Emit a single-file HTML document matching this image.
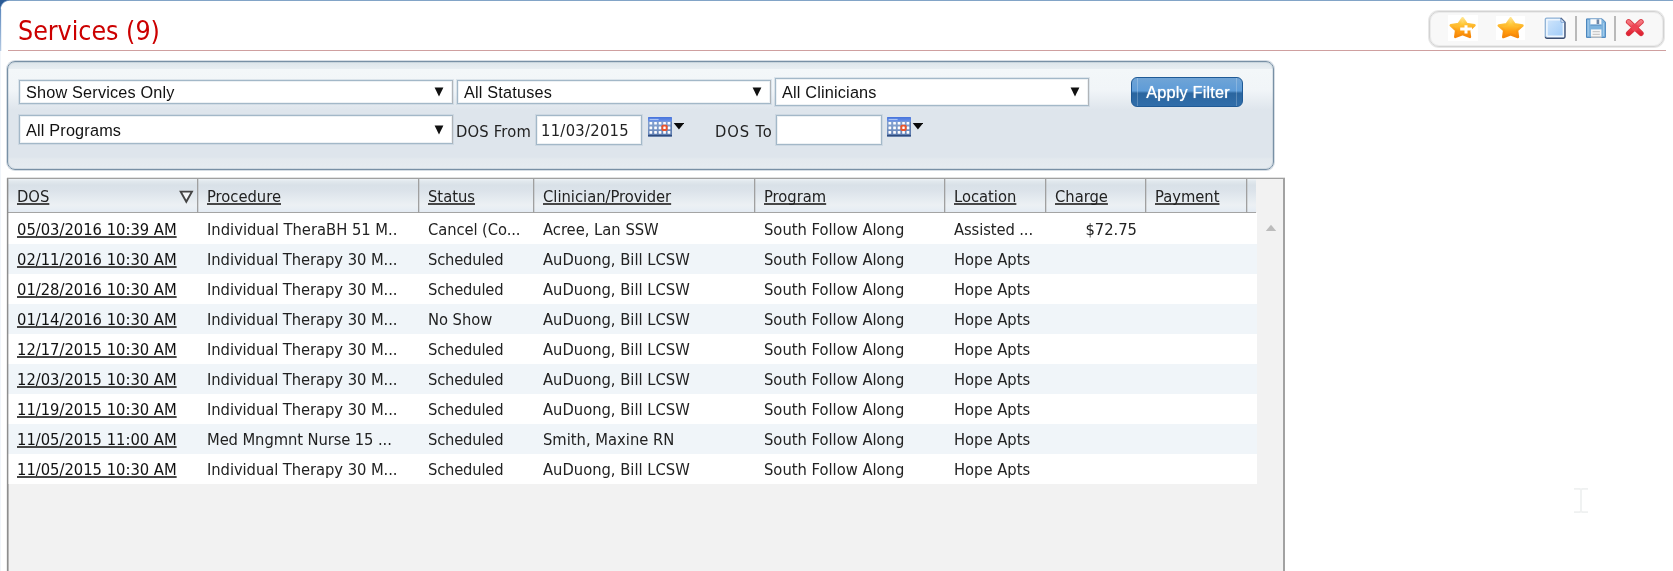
<!DOCTYPE html>
<html>
<head>
<meta charset="utf-8">
<title>Services (9)</title>
<style>
html,body{margin:0;padding:0;}
body{width:1673px;height:571px;overflow:hidden;background:#fff;position:relative;
  font-family:"DejaVu Sans Condensed","DejaVu Sans","Liberation Sans",sans-serif;color:#222;}
.abs{position:absolute;}
#topline{left:0;top:0;width:1673px;height:1px;background:#82a4c7;}
#title{left:18px;top:12px;font-size:26.5px;line-height:38px;color:#cc0000;white-space:nowrap;}
#redline{left:8px;top:50px;width:1658px;height:1px;background:#cfa0a0;}
#toolbar{left:1429px;top:11px;width:233px;height:34px;border:1px solid #d3d3d3;border-radius:10px;background:#f8f8f8;box-shadow:0 0 0 1px rgba(205,205,205,.45), inset 0 0 0 1px rgba(205,205,205,.3);}
.sep{width:2px;height:25px;top:16px;background:#b9b9b9;}
#filter{left:7px;top:61px;width:1265px;height:107px;border:1px solid #7890a5;border-radius:8px;
  box-shadow:0 0 0 1px rgba(120,144,165,.3), inset 0 0 0 1px rgba(120,144,165,.2);
  background:linear-gradient(#dde5ea 0px,#e8eef2 7px,#f3f7f9 7.5px,#f1f5f8 28px,#dee5ec 48px,#dee5ec 95px,#e3e9ee 97px,#e5ebf0 107px);}
.sel{background:#fff;border:1px solid #a3b8c8;border-right-color:#b0b4b8;box-shadow:0 0 0 1px rgba(163,184,200,.28), inset 0 0 0 1px rgba(163,184,200,.2);box-sizing:border-box;font-family:"Liberation Sans",sans-serif;font-size:16.25px;letter-spacing:.18px;color:#111;white-space:nowrap;}
.sel span{position:absolute;left:6px;line-height:20px;}
.sel svg{position:absolute;}
.lbl{font-size:16.4px;letter-spacing:.2px;line-height:20px;white-space:nowrap;color:#222;}
.inp{background:#fff;border:1px solid #a3b8c8;box-shadow:0 0 0 1px rgba(163,184,200,.28), inset 0 0 0 1px rgba(163,184,200,.2);box-sizing:border-box;font-size:16.4px;white-space:nowrap;}
.inp span{position:absolute;left:5px;top:5px;line-height:20px;}
#btn{left:1131px;top:77px;width:112px;height:30px;box-sizing:border-box;border:1px solid #1f5a96;border-radius:6px;padding-left:2px;
  background:linear-gradient(#70a4d6 0,#5e9cd8 46%,#2b669f 54%,#306daa 100%);color:#fff;font-family:"Liberation Sans",sans-serif;font-size:16.25px;text-align:center;line-height:28px;letter-spacing:.2px;text-shadow:0 0 1px #fff;white-space:nowrap;}
#btn:before,#btn:after{content:"";position:absolute;top:0;width:1px;height:28px;background:rgba(255,255,255,.22);}
#btn:before{left:5px;}
#btn:after{right:5px;}
#grid{left:7px;top:178px;width:1275px;height:400px;border:1px solid #a0a0a0;border-left-color:#8e8e8e;border-right:2px solid #a2a2a2;background:#f2f2f2;box-shadow:0 -1px 0 rgba(160,160,160,.3), inset 1px 0 0 rgba(140,140,140,.35), -1px 0 0 rgba(140,140,140,.15);}
#hdr{left:0;top:0;width:1248px;height:33px;background:linear-gradient(#eef3f7 0,#e2e9ee 2px,#d9e1e8 6px,#dce3ea 12px,#e5ebf0 20px,#ecf0f4 26px,#e8eef4 30px,#e3eaf2 33px);border-bottom:1px solid #a4a4a4;}
#hdr u{text-decoration-thickness:2px;text-underline-offset:1px;text-decoration-color:#484848;text-decoration-skip-ink:none;top:8px;font-size:16.4px;line-height:20px;white-space:nowrap;color:#222;}
.hs{top:0;width:1px;height:34px;background:#a0a0a0;box-shadow:1px 0 0 rgba(160,160,160,.3);}
.row{left:0;width:1249px;height:30px;background:#fff;}
.row.alt{background:#f0f5f9;}
.row span{position:absolute;top:5px;font-size:16.4px;line-height:20px;white-space:nowrap;color:#222;}
.row span.d{text-decoration:underline;text-decoration-thickness:2px;text-underline-offset:1px;text-decoration-color:#484848;text-decoration-skip-ink:none;color:#111;}
#sbar{left:1249px;top:0;width:26px;height:400px;background:#f2f2f2;}
#page{position:absolute;left:0;top:0;width:1673px;height:571px;will-change:transform;}
#corner{left:0;top:0;width:9px;height:9px;background:radial-gradient(circle at 9px 9px,rgba(255,255,255,1) 7.6px,#7fa2cc 8.3px,#2b5b95 9.2px);}
#leftline{left:0;top:9px;width:1px;height:42px;background:linear-gradient(#5f8abf,#b4c9e2);box-shadow:1px 0 0 rgba(120,160,205,.15);}
#leftline2{left:0;top:51px;width:1px;height:520px;background:#f1f5fa;}
.row span.c1{letter-spacing:0;}
.row span.c2{letter-spacing:-.04px;}
#lb{left:0;top:0;width:1px;height:400px;background:rgba(140,140,140,.35);}
</style>
</head>
<body>
<div id="page">
<div id="topline" class="abs"></div>
<div id="leftline" class="abs"></div>
<div id="leftline2" class="abs"></div>
<div id="corner" class="abs"></div>
<div id="title" class="abs">Services (9)</div>
<div id="redline" class="abs"></div>
<div id="toolbar" class="abs"></div>
<div class="abs sep" style="left:1575px"></div>
<div class="abs sep" style="left:1614px"></div>
<svg width="0" height="0" style="position:absolute"><defs>
<linearGradient id="gs" x1="0" y1="0" x2="0" y2="1"><stop offset="0" stop-color="#ffee9a"/><stop offset="0.3" stop-color="#ffcb3c"/><stop offset="0.7" stop-color="#ff9d10"/><stop offset="1" stop-color="#ff8a08"/></linearGradient>
<linearGradient id="gp" x1="0" y1="0" x2="1" y2="1"><stop offset="0" stop-color="#d3e7fb"/><stop offset="1" stop-color="#9cc9f8"/></linearGradient>
<linearGradient id="gx" x1="0" y1="0" x2="0" y2="1"><stop offset="0" stop-color="#f47880"/><stop offset="0.5" stop-color="#ee4454"/><stop offset="1" stop-color="#e02434"/></linearGradient>
<linearGradient id="gf" x1="0" y1="0" x2="0" y2="1"><stop offset="0" stop-color="#6aa5dc"/><stop offset="1" stop-color="#3f7fc0"/></linearGradient>
<linearGradient id="gc" x1="0" y1="0" x2="0" y2="1"><stop offset="0" stop-color="#4673dc"/><stop offset="1" stop-color="#6d93e6"/></linearGradient>
<linearGradient id="gs2" x1="0" y1="0" x2="0" y2="1"><stop offset="0" stop-color="#ffe388"/><stop offset="0.3" stop-color="#ffc236"/><stop offset="0.7" stop-color="#fb9810"/><stop offset="1" stop-color="#f58508"/></linearGradient>
<linearGradient id="gcb" x1="0" y1="0" x2="0" y2="1"><stop offset="0" stop-color="#7f9dcc"/><stop offset="1" stop-color="#5c7bb0"/></linearGradient>
</defs></svg>
<svg class="abs" style="left:1448px;top:15px" width="30" height="26" viewBox="0 0 30 26"><rect width="30" height="26" fill="#fff"/><polygon points="14.60,3.30 18.54,9.09 26.40,10.40 20.97,15.30 21.89,21.90 14.60,19.13 7.31,21.90 8.23,15.30 2.80,10.40 10.66,9.09" fill="url(#gs)" stroke="url(#gs2)" stroke-width="2.6" stroke-linejoin="round"/><path d="M12.2 14 H24 M18 10.3 V18.6" stroke="#fff" stroke-width="3" fill="none"/></svg>
<svg class="abs" style="left:1496px;top:16px" width="29" height="24" viewBox="0 0 29 24"><rect width="29" height="24" fill="#fff"/><polygon points="14.60,2.40 18.54,8.19 26.40,9.50 20.97,14.40 21.89,21.00 14.60,18.23 7.31,21.00 8.23,14.40 2.80,9.50 10.66,8.19" fill="url(#gs)" stroke="url(#gs2)" stroke-width="2.6" stroke-linejoin="round"/></svg>
<svg class="abs" style="left:1543px;top:16px" width="24" height="24" viewBox="0 0 24 24"><rect x="0" y="0.5" width="23.5" height="23" fill="#fbfbfb"/><path d="M2.6 2.4 H17.8 L21.8 6.4 V21.6 H2.6 Z" fill="url(#gp)"/><path d="M3.9 20.3 V3.7 H17.2 M20.5 7 V20.3 H3.9" fill="none" stroke="#eef6fe" stroke-width="1.7"/><path d="M2.3 20.8 V3.6 Q2.3 2.1 3.8 2.1 H17.8" fill="none" stroke="#8fb2d6" stroke-width="1.3"/><path d="M17.8 2.1 L22 6.3 V20.8 Q22 22.2 20.6 22.2 H3.7 Q2.3 22.2 2.3 20.8" fill="none" stroke="#3c4f72" stroke-width="1.4"/><path d="M18 2.6 V6.2 H21.6 Z" fill="#f4f9ff" stroke="#5f86c0" stroke-width="0.7"/></svg>
<svg class="abs" style="left:1586px;top:18px" width="20" height="20" viewBox="0 0 20 20"><path d="M0.5 0.9 H16.2 L19.4 4.1 V19.4 H0.5 Z" fill="#7db3de" stroke="#4c86bd" stroke-width="1"/><path d="M2.2 2 V18 M17.6 5 V18" stroke="#a5cdec" stroke-width="1" fill="none"/><rect x="4.4" y="1.2" width="11" height="5.4" fill="#fafbfc"/><rect x="10.6" y="1.4" width="2.6" height="4.6" fill="#6f87a6"/><rect x="4.4" y="6.6" width="11" height="1" fill="#5c92c6"/><rect x="5" y="11.4" width="10.4" height="8" fill="#f6f6f6"/><path d="M6.6 13.6 H13.8 M6.6 16.4 H13.8" stroke="#c9c9c9" stroke-width="1.3"/><rect x="5" y="18.4" width="10.4" height="1.2" fill="#b9b9b9"/></svg>
<svg class="abs" style="left:1624px;top:17px" width="22" height="21" viewBox="0 0 22 21"><path d="M4.6 4.8 L17 16.4 M17 4.8 L4.6 16.4" stroke="#d83440" stroke-width="5.4" stroke-linecap="round" fill="none"/><path d="M4.6 4.8 L17 16.4 M17 4.8 L4.6 16.4" stroke="url(#gx)" stroke-width="3.8" stroke-linecap="round" fill="none"/><circle cx="10.8" cy="10.6" r="3.4" fill="#ee4454"/></svg>

<div id="filter" class="abs"></div>
<div class="abs sel" style="left:19px;top:80px;width:434px;height:24px"><span style="top:1px">Show Services Only</span></div>
<div class="abs sel" style="left:457px;top:80px;width:314px;height:24px"><span style="top:1px">All Statuses</span></div>
<div class="abs sel" style="left:775px;top:78px;width:314px;height:28px"><span style="top:3px">All Clinicians</span></div>
<div class="abs sel" style="left:19px;top:115px;width:434px;height:29px"><span style="top:4px">All Programs</span></div>
<svg class="abs" style="left:433.5px;top:87.0px" width="10" height="10" viewBox="0 0 10 10"><path d="M0.6 0.6 H9.4 L5 9.6 Z" fill="#111"/></svg>
<svg class="abs" style="left:751.7px;top:87.0px" width="10" height="10" viewBox="0 0 10 10"><path d="M0.6 0.6 H9.4 L5 9.6 Z" fill="#111"/></svg>
<svg class="abs" style="left:1069.6px;top:86.7px" width="10" height="10" viewBox="0 0 10 10"><path d="M0.6 0.6 H9.4 L5 9.6 Z" fill="#111"/></svg>
<svg class="abs" style="left:433.5px;top:124.6px" width="10" height="10" viewBox="0 0 10 10"><path d="M0.6 0.6 H9.4 L5 9.6 Z" fill="#111"/></svg>
<div class="abs lbl" style="left:456px;top:122px">DOS From</div>
<div class="abs inp" style="left:536px;top:115px;width:106px;height:30px"><span style="left:4px;letter-spacing:.3px">11/03/2015</span></div>
<div class="abs lbl" style="left:715px;top:122px;letter-spacing:.9px;word-spacing:0px">DOS To</div>
<div class="abs inp" style="left:776px;top:115px;width:106px;height:30px"></div>
<svg class="abs" style="left:648.00px;top:117.25px" width="36" height="20" viewBox="0 0 36 20"><rect x="0" y="0" width="24" height="19.4" rx="1" fill="#7f9dcc"/><rect x="0" y="9" width="24" height="10.4" fill="url(#gcb)"/><rect x="0" y="0" width="24" height="4.6" rx="1" fill="url(#gc)"/><rect x="1.6" y="1.9" width="9" height="1.2" fill="#aac4f4"/><rect x="22.6" y="4.6" width="1.4" height="14" fill="#5f7db0"/><rect x="0" y="17.9" width="24" height="1.5" fill="#2f4c7e"/><rect x="1.5" y="4.9" width="2.7" height="2.7" rx="0.5" fill="#fdfdff"/><rect x="6.2" y="4.9" width="2.7" height="2.7" rx="0.5" fill="#fdfdff"/><rect x="10.7" y="4.9" width="2.7" height="2.7" rx="0.5" fill="#fdfdff"/><rect x="15.2" y="4.9" width="2.7" height="2.7" rx="0.5" fill="#fdfdff"/><rect x="19.6" y="4.9" width="2.7" height="2.7" rx="0.5" fill="#fdfdff"/><rect x="1.5" y="9.5" width="2.7" height="2.7" rx="0.5" fill="#fdfdff"/><rect x="6.2" y="9.5" width="2.7" height="2.7" rx="0.5" fill="#fdfdff"/><rect x="10.7" y="9.5" width="2.7" height="2.7" rx="0.5" fill="#fdfdff"/><rect x="15.2" y="9.5" width="2.7" height="2.7" rx="0.5" fill="#fdfdff"/><rect x="19.6" y="9.5" width="2.7" height="2.7" rx="0.5" fill="#fdfdff"/><rect x="1.5" y="14.1" width="2.7" height="2.7" rx="0.5" fill="#fdfdff"/><rect x="6.2" y="14.1" width="2.7" height="2.7" rx="0.5" fill="#fdfdff"/><rect x="10.7" y="14.1" width="2.7" height="2.7" rx="0.5" fill="#fdfdff"/><rect x="15.2" y="14.1" width="2.7" height="2.7" rx="0.5" fill="#fdfdff"/><rect x="19.6" y="14.1" width="2.7" height="2.7" rx="0.5" fill="#fdfdff"/><rect x="13.4" y="7.7" width="6.2" height="6.2" rx="1.6" fill="#e9552d"/><rect x="15.3" y="9.6" width="2.4" height="2.4" rx="0.5" fill="#fff"/><path d="M25.7 6 H36.2 L30.95 12.4 Z" fill="#0a0a0a"/></svg>
<svg class="abs" style="left:886.80px;top:117.25px" width="36" height="20" viewBox="0 0 36 20"><rect x="0" y="0" width="24" height="19.4" rx="1" fill="#7f9dcc"/><rect x="0" y="9" width="24" height="10.4" fill="url(#gcb)"/><rect x="0" y="0" width="24" height="4.6" rx="1" fill="url(#gc)"/><rect x="1.6" y="1.9" width="9" height="1.2" fill="#aac4f4"/><rect x="22.6" y="4.6" width="1.4" height="14" fill="#5f7db0"/><rect x="0" y="17.9" width="24" height="1.5" fill="#2f4c7e"/><rect x="1.5" y="4.9" width="2.7" height="2.7" rx="0.5" fill="#fdfdff"/><rect x="6.2" y="4.9" width="2.7" height="2.7" rx="0.5" fill="#fdfdff"/><rect x="10.7" y="4.9" width="2.7" height="2.7" rx="0.5" fill="#fdfdff"/><rect x="15.2" y="4.9" width="2.7" height="2.7" rx="0.5" fill="#fdfdff"/><rect x="19.6" y="4.9" width="2.7" height="2.7" rx="0.5" fill="#fdfdff"/><rect x="1.5" y="9.5" width="2.7" height="2.7" rx="0.5" fill="#fdfdff"/><rect x="6.2" y="9.5" width="2.7" height="2.7" rx="0.5" fill="#fdfdff"/><rect x="10.7" y="9.5" width="2.7" height="2.7" rx="0.5" fill="#fdfdff"/><rect x="15.2" y="9.5" width="2.7" height="2.7" rx="0.5" fill="#fdfdff"/><rect x="19.6" y="9.5" width="2.7" height="2.7" rx="0.5" fill="#fdfdff"/><rect x="1.5" y="14.1" width="2.7" height="2.7" rx="0.5" fill="#fdfdff"/><rect x="6.2" y="14.1" width="2.7" height="2.7" rx="0.5" fill="#fdfdff"/><rect x="10.7" y="14.1" width="2.7" height="2.7" rx="0.5" fill="#fdfdff"/><rect x="15.2" y="14.1" width="2.7" height="2.7" rx="0.5" fill="#fdfdff"/><rect x="19.6" y="14.1" width="2.7" height="2.7" rx="0.5" fill="#fdfdff"/><rect x="13.4" y="7.7" width="6.2" height="6.2" rx="1.6" fill="#e9552d"/><rect x="15.3" y="9.6" width="2.4" height="2.4" rx="0.5" fill="#fff"/><path d="M25.7 6 H36.2 L30.95 12.4 Z" fill="#0a0a0a"/></svg>
<div id="btn" class="abs">Apply Filter</div>
<div id="grid" class="abs">
<div id="hdr" class="abs">
<u class="abs" style="left:9px">DOS</u>
<u class="abs" style="left:199px">Procedure</u>
<u class="abs" style="left:420px">Status</u>
<u class="abs" style="left:535px">Clinician/Provider</u>
<u class="abs" style="left:756px">Program</u>
<u class="abs" style="left:946px">Location</u>
<u class="abs" style="left:1047px">Charge</u>
<u class="abs" style="left:1147px">Payment</u>
<b class="abs hs" style="left:189px"></b>
<b class="abs hs" style="left:410px"></b>
<b class="abs hs" style="left:525px"></b>
<b class="abs hs" style="left:746px"></b>
<b class="abs hs" style="left:936px"></b>
<b class="abs hs" style="left:1037px"></b>
<b class="abs hs" style="left:1137px"></b>
<b class="abs hs" style="left:1238px"></b>
<svg class="abs" style="left:170.7px;top:11.2px" width="15" height="14" viewBox="0 0 15 14"><path d="M1.7 1.6 H12.9 L7.3 11.7 Z" fill="#f4f6f8" stroke="#444" stroke-width="1.9" stroke-linejoin="miter"/></svg>
</div>
<div class="abs row" style="top:34px;height:31px"><span class="d" style="left:9px;top:7px">05/03/2016 10:39 AM</span><span class="c1" style="left:199px;top:7px">Individual TheraBH 51 M..</span><span class="c2" style="left:420px;top:7px;letter-spacing:-0.08px">Cancel (Co...</span><span style="left:535px;top:7px">Acree, Lan SSW</span><span style="left:756px;top:7px">South Follow Along</span><span style="left:946px;top:7px;letter-spacing:-.1px">Assisted ...</span><span style="right:120px;top:7px">$72.75</span></div>
<div class="abs row alt" style="top:65px;height:30px"><span class="d" style="left:9px;top:6px">02/11/2016 10:30 AM</span><span class="c1" style="left:199px;top:6px;letter-spacing:-0.06px">Individual Therapy 30 M...</span><span class="c2" style="left:420px;top:6px;letter-spacing:-0.2px">Scheduled</span><span style="left:535px;top:6px">AuDuong, Bill LCSW</span><span style="left:756px;top:6px">South Follow Along</span><span style="left:946px;top:6px">Hope Apts</span></div>
<div class="abs row" style="top:95px;height:30px"><span class="d" style="left:9px;top:6px">01/28/2016 10:30 AM</span><span class="c1" style="left:199px;top:6px;letter-spacing:-0.06px">Individual Therapy 30 M...</span><span class="c2" style="left:420px;top:6px;letter-spacing:-0.2px">Scheduled</span><span style="left:535px;top:6px">AuDuong, Bill LCSW</span><span style="left:756px;top:6px">South Follow Along</span><span style="left:946px;top:6px">Hope Apts</span></div>
<div class="abs row alt" style="top:125px;height:30px"><span class="d" style="left:9px;top:6px">01/14/2016 10:30 AM</span><span class="c1" style="left:199px;top:6px;letter-spacing:-0.06px">Individual Therapy 30 M...</span><span class="c2" style="left:420px;top:6px">No Show</span><span style="left:535px;top:6px">AuDuong, Bill LCSW</span><span style="left:756px;top:6px">South Follow Along</span><span style="left:946px;top:6px">Hope Apts</span></div>
<div class="abs row" style="top:155px;height:30px"><span class="d" style="left:9px;top:6px">12/17/2015 10:30 AM</span><span class="c1" style="left:199px;top:6px;letter-spacing:-0.06px">Individual Therapy 30 M...</span><span class="c2" style="left:420px;top:6px;letter-spacing:-0.2px">Scheduled</span><span style="left:535px;top:6px">AuDuong, Bill LCSW</span><span style="left:756px;top:6px">South Follow Along</span><span style="left:946px;top:6px">Hope Apts</span></div>
<div class="abs row alt" style="top:185px;height:30px"><span class="d" style="left:9px;top:6px">12/03/2015 10:30 AM</span><span class="c1" style="left:199px;top:6px;letter-spacing:-0.06px">Individual Therapy 30 M...</span><span class="c2" style="left:420px;top:6px;letter-spacing:-0.2px">Scheduled</span><span style="left:535px;top:6px">AuDuong, Bill LCSW</span><span style="left:756px;top:6px">South Follow Along</span><span style="left:946px;top:6px">Hope Apts</span></div>
<div class="abs row" style="top:215px;height:30px"><span class="d" style="left:9px;top:6px">11/19/2015 10:30 AM</span><span class="c1" style="left:199px;top:6px;letter-spacing:-0.06px">Individual Therapy 30 M...</span><span class="c2" style="left:420px;top:6px;letter-spacing:-0.2px">Scheduled</span><span style="left:535px;top:6px">AuDuong, Bill LCSW</span><span style="left:756px;top:6px">South Follow Along</span><span style="left:946px;top:6px">Hope Apts</span></div>
<div class="abs row alt" style="top:245px;height:30px"><span class="d" style="left:9px;top:6px">11/05/2015 11:00 AM</span><span class="c1" style="left:199px;top:6px;letter-spacing:-0.09px">Med Mngmnt Nurse 15 ...</span><span class="c2" style="left:420px;top:6px;letter-spacing:-0.2px">Scheduled</span><span style="left:535px;top:6px">Smith, Maxine RN</span><span style="left:756px;top:6px">South Follow Along</span><span style="left:946px;top:6px">Hope Apts</span></div>
<div class="abs row" style="top:275px;height:30px"><span class="d" style="left:9px;top:6px">11/05/2015 10:30 AM</span><span class="c1" style="left:199px;top:6px;letter-spacing:-0.06px">Individual Therapy 30 M...</span><span class="c2" style="left:420px;top:6px;letter-spacing:-0.2px">Scheduled</span><span style="left:535px;top:6px">AuDuong, Bill LCSW</span><span style="left:756px;top:6px">South Follow Along</span><span style="left:946px;top:6px">Hope Apts</span></div>
<div class="abs" id="sbar"></div>
<div class="abs" id="lb"></div>
<svg class="abs" style="left:1256.5px;top:44.5px" width="12" height="8" viewBox="0 0 12 8"><path d="M6 0.8 L11.2 7 H0.8 Z" fill="#bcbcbc"/></svg>
</div>
<svg class="abs" style="left:1573px;top:487px" width="16" height="27" viewBox="0 0 16 27"><path d="M1 1.9 H6.6 L8 2.6 L9.4 1.9 H15 M8 2.6 V24.4 M1 25.1 H6.6 L8 24.4 L9.4 25.1 H15" fill="none" stroke="#eff1f1" stroke-width="1.8"/></svg>
</div>
</body>
</html>
